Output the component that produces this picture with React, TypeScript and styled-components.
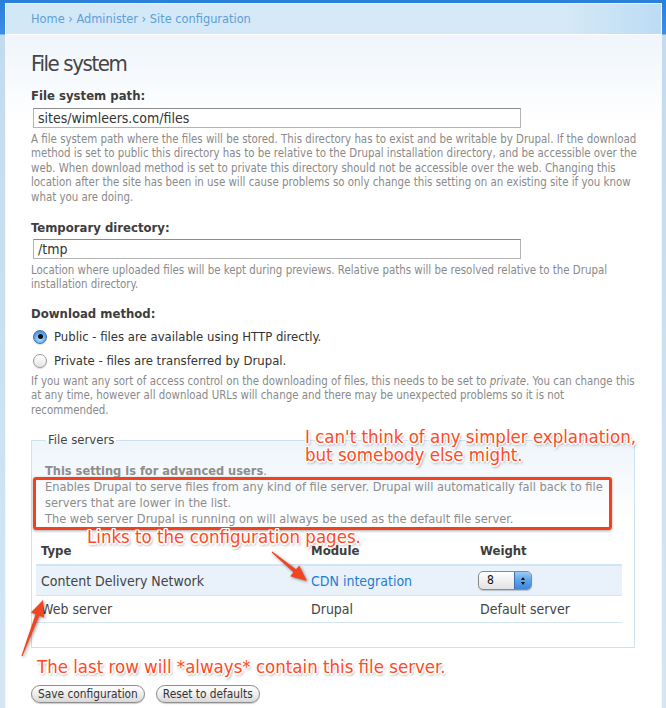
import React from 'react';
import styled, { createGlobalStyle } from 'styled-components';

const GlobalStyle = createGlobalStyle`
  html, body {
    margin: 0;
    padding: 0;
    background: #cfe2f1;
  }
  body {
    font-family: 'DejaVu Sans Condensed', 'DejaVu Sans', sans-serif;
    font-stretch: condensed;
    color: #444;
  }
`;

const Page = styled.div`
  position: relative;
  width: 666px;
  height: 708px;
  overflow: hidden;
  padding: 3px 4px 0 5px;
  box-sizing: border-box;
  background: linear-gradient(
    to bottom,
    #2a7fda 0,
    #3b8ee3 34px,
    #c3dbef 35px,
    #d4e6f4 100%
  );
`;

const Panel = styled.div`
  height: 100%;
  border-left: 1px solid #f4f8fc;
  border-top: 1px solid #e8f2fb;
  border-right: 1px solid #f4f8fc;
  background: linear-gradient(to bottom, #eaf2fa 0, #ffffff 120px, #ffffff 100%);
`;

const Breadcrumb = styled.div`
  height: 30px;
  line-height: 30px;
  padding-left: 25px;
  font-family: 'DejaVu Sans', sans-serif;
  font-stretch: normal;
  font-size: 11.4px;
  color: #5d9fd9;
  border-bottom: 1px solid #ffffff;
  background: linear-gradient(to right, #d3e8f7 0, #d6e9f7 85%, #bcdcf4 100%);
`;

const Content = styled.div`
  padding: 14px 20px 0 25px;
`;

const Title = styled.h1`
  margin: 0;
  font-family: 'DejaVu Sans Condensed', 'DejaVu Sans', sans-serif;
  font-stretch: condensed;
  font-weight: normal;
  font-size: 22px;
  letter-spacing: -1.4px;
  line-height: 30px;
  color: #444;
`;

const Label = styled.div<{ $gap?: number }>`
  margin-top: ${(p) => p.$gap ?? 9}px;
  font-weight: bold;
  font-size: 13px;
  line-height: 16px;
  color: #3d3d3d;
`;

const TextInput = styled.div<{ $gap?: number }>`
  margin-top: ${(p) => p.$gap ?? 4}px;
  margin-left: 2px;
  width: 488px;
  height: 20px;
  box-sizing: border-box;
  padding-left: 4px;
  border: 1px solid #b4b4b4;
  border-top-color: #8c8c8c;
  background: #fff;
  font-size: 14px;
  line-height: 18px;
  color: #333;
`;

const Description = styled.div<{ $gap?: number }>`
  margin-top: ${(p) => p.$gap ?? 4}px;
  font-size: 11.4px;
  line-height: 14.4px;
  color: #8a8a8a;
`;

const RadioGroup = styled.div`
  margin-top: 3px;
`;

const RadioRow = styled.label`
  display: flex;
  align-items: center;
  height: 24px;
  gap: 7px;
  padding-left: 2px;
  font-size: 13px;
  color: #333;
`;

const Radio = styled.span<{ $checked?: boolean }>`
  width: 14px;
  height: 14px;
  border-radius: 50%;
  box-sizing: border-box;
  display: flex;
  align-items: center;
  justify-content: center;
  border: 1px solid ${(p) => (p.$checked ? '#3a6fae' : '#9a9a9a')};
  background: ${(p) =>
    p.$checked
      ? 'radial-gradient(circle at 50% 65%, #bfe3ff 0, #6fb2f2 45%, #2f7ad2 100%)'
      : 'linear-gradient(to bottom, #ffffff 0, #e4e4e4 100%)'};
  box-shadow: 0 1px 1px rgba(0, 0, 0, 0.15);

  &::after {
    content: '';
    display: ${(p) => (p.$checked ? 'block' : 'none')};
    width: 5px;
    height: 5px;
    border-radius: 50%;
    background: #111;
  }
`;

const Fieldset = styled.fieldset`
  margin: 15px 6px 37px 0;
  padding: 15px 12px 24px 4px;
  border: 1px solid #cfe1ef;
  background: linear-gradient(to bottom, #eef5fb 0, #ffffff 80px, #ffffff 100%);
  min-width: 0;
`;

const Legend = styled.legend`
  margin-left: 10px;
  padding: 0 2px;
  font-size: 13px;
  line-height: 16px;
  color: #444;
`;

const FieldsetText = styled.div`
  padding-left: 9px;
  font-size: 12.7px;
  line-height: 16px;
  color: #8d8d8d;

  strong {
    font-weight: bold;
  }
`;

const Table = styled.table`
  margin-top: 10px;
  width: 100%;
  border-collapse: collapse;
  font-size: 14px;
  color: #444;
`;

const Th = styled.th`
  text-align: left;
  font-weight: bold;
  font-size: 13px;
  height: 27px;
  padding: 0 5px;
  border-bottom: 2px solid #d3e4f2;
  color: #3d3d3d;
`;

const Tr = styled.tr<{ $shaded?: boolean }>`
  background: ${(p) => (p.$shaded ? '#e9f2fa' : 'transparent')};
  border-bottom: 1px solid #d3e4f2;
`;

const Td = styled.td<{ $h: number }>`
  height: ${(p) => p.$h}px;
  padding: 0 5px;
`;

const Link = styled.a`
  color: #1f7cd3;
  text-decoration: none;
`;

const Select = styled.span`
  display: inline-flex;
  align-items: stretch;
  width: 54px;
  height: 19px;
  margin-left: -2px;
  box-sizing: border-box;
  border: 1px solid #8a8a8a;
  border-radius: 5px;
  overflow: hidden;
  background: linear-gradient(to bottom, #ffffff 0, #f0f0f0 50%, #e2e2e2 100%);
  box-shadow: 0 1px 1px rgba(0, 0, 0, 0.2);
  font-size: 12px;
  vertical-align: middle;
`;

const SelectValue = styled.span`
  flex: 1;
  padding-left: 8px;
  line-height: 17px;
  color: #111;
`;

const Stepper = styled.span`
  width: 16px;
  display: flex;
  flex-direction: column;
  align-items: center;
  justify-content: center;
  gap: 2px;
  border-left: 1px solid #3d6eb0;
  background: linear-gradient(to bottom, #9cc9f4 0, #5ea2e8 50%, #3f86dd 100%);
`;

const Tri = styled.span<{ $up?: boolean }>`
  width: 0;
  height: 0;
  border-left: 2.5px solid transparent;
  border-right: 2.5px solid transparent;
  ${(p) => (p.$up ? 'border-bottom: 3px solid #111;' : 'border-top: 3px solid #111;')}
`;

const Buttons = styled.div`
  display: flex;
  gap: 11px;
`;

const Button = styled.button`
  margin: 0;
  height: 18px;
  padding: 0 6px;
  border: 1px solid #8e8e8e;
  border-radius: 9px;
  background: linear-gradient(to bottom, #ffffff 0, #eeeeee 50%, #d9d9d9 100%);
  box-shadow: 0 1px 1px rgba(0, 0, 0, 0.2);
  font-family: 'DejaVu Sans Condensed', 'DejaVu Sans', sans-serif;
  font-stretch: condensed;
  font-size: 11.8px;
  line-height: 16px;
  color: #333;
`;

// annotation layer drawn over the screenshot
const Note = styled.div<{ $x: number; $y: number }>`
  position: absolute;
  left: ${(p) => p.$x}px;
  top: ${(p) => p.$y}px;
  white-space: nowrap;
  font-family: 'DejaVu Sans Condensed', 'DejaVu Sans', sans-serif;
  font-stretch: condensed;
  font-size: 18.5px;
  line-height: 18px;
  color: #ff4a26;
  text-shadow: -1px -1px 0 #fff, 1px -1px 0 #fff, -1px 1px 0 #fff, 1px 1px 0 #fff,
    0 -1.5px 0 #fff, 0 1.5px 0 #fff, -1.5px 0 0 #fff, 1.5px 0 0 #fff,
    1px 2px 3px rgba(0, 0, 0, 0.55);
`;

const RedBox = styled.div`
  position: absolute;
  left: 33px;
  top: 477px;
  width: 579px;
  height: 53px;
  box-sizing: border-box;
  border: 3px solid #f4401d;
  border-radius: 3px;
  box-shadow: 0 1px 3px rgba(0, 0, 0, 0.35);
`;

const Arrows = styled.svg`
  position: absolute;
  left: 0;
  top: 0;
  pointer-events: none;
  filter: drop-shadow(1px 1px 1.5px rgba(0, 0, 0, 0.45));
`;

export default function App() {
  return (
    <>
      <GlobalStyle />
      <Page>
        <Panel>
          <Breadcrumb>Home › Administer › Site configuration</Breadcrumb>
          <Content>
            <Title>File system</Title>

            <Label>File system path:</Label>
            <TextInput>sites/wimleers.com/files</TextInput>
            <Description>
              A file system path where the files will be stored. This directory has to exist and be
              writable by Drupal. If the download method is set to public this directory has to be
              relative to the Drupal installation directory, and be accessible over the web. When
              download method is set to private this directory should not be accessible over the
              web. Changing this location after the site has been in use will cause problems so only
              change this setting on an existing site if you know what you are doing.
            </Description>

            <Label $gap={16}>Temporary directory:</Label>
            <TextInput $gap={3}>/tmp</TextInput>
            <Description>
              Location where uploaded files will be kept during previews. Relative paths will be
              resolved relative to the Drupal installation directory.
            </Description>

            <Label $gap={14}>Download method:</Label>
            <RadioGroup>
              <RadioRow>
                <Radio $checked />
                Public - files are available using HTTP directly.
              </RadioRow>
              <RadioRow>
                <Radio />
                Private - files are transferred by Drupal.
              </RadioRow>
            </RadioGroup>
            <Description $gap={1}>
              If you want any sort of access control on the downloading of files, this needs to be
              set to <em>private</em>. You can change this at any time, however all download URLs
              will change and there may be unexpected problems so it is not recommended.
            </Description>

            <Fieldset>
              <Legend>File servers</Legend>
              <FieldsetText>
                <strong>This setting is for advanced users</strong>.
                <br />
                Enables Drupal to serve files from any kind of file server. Drupal will automatically
                fall back to file servers that are lower in the list.
                <br />
                The web server Drupal is running on will always be used as the default file server.
              </FieldsetText>
              <Table>
                <thead>
                  <tr>
                    <Th style={{ width: 260 }}>Type</Th>
                    <Th style={{ width: 159 }}>Module</Th>
                    <Th>Weight</Th>
                  </tr>
                </thead>
                <tbody>
                  <Tr $shaded>
                    <Td $h={29}>Content Delivery Network</Td>
                    <Td $h={29}>
                      <Link href="#">CDN integration</Link>
                    </Td>
                    <Td $h={29}>
                      <Select>
                        <SelectValue>8</SelectValue>
                        <Stepper>
                          <Tri $up />
                          <Tri />
                        </Stepper>
                      </Select>
                    </Td>
                  </Tr>
                  <Tr>
                    <Td $h={26}>Web server</Td>
                    <Td $h={26}>Drupal</Td>
                    <Td $h={26}>Default server</Td>
                  </Tr>
                </tbody>
              </Table>
            </Fieldset>

            <Buttons>
              <Button>Save configuration</Button>
              <Button>Reset to defaults</Button>
            </Buttons>
          </Content>
        </Panel>

        <RedBox />
        <Note $x={305} $y={428}>
          I can't think of any simpler explanation,
          <br />
          but somebody else might.
        </Note>
        <Note $x={87} $y={528}>
          Links to the configuration pages.
        </Note>
        <Note $x={37} $y={658}>
          The last row will *always* contain this file server.
        </Note>
        <Arrows width={666} height={708} viewBox="0 0 666 708">
          <path
            fill="#f0451f"
            d="M271.7 552.4 L272.3 551.6 L296 569.3 L299.2 565.4 L307 581 L290.2 576.2 L293.4 572.3 Z"
          />
          <path
            fill="#f0451f"
            d="M21.5 655.8 L22.5 656.2 L39.3 615.7 L44 617.5 L43 600 L30.9 612.5 L35.5 614.3 Z"
          />
        </Arrows>
      </Page>
    </>
  );
}
